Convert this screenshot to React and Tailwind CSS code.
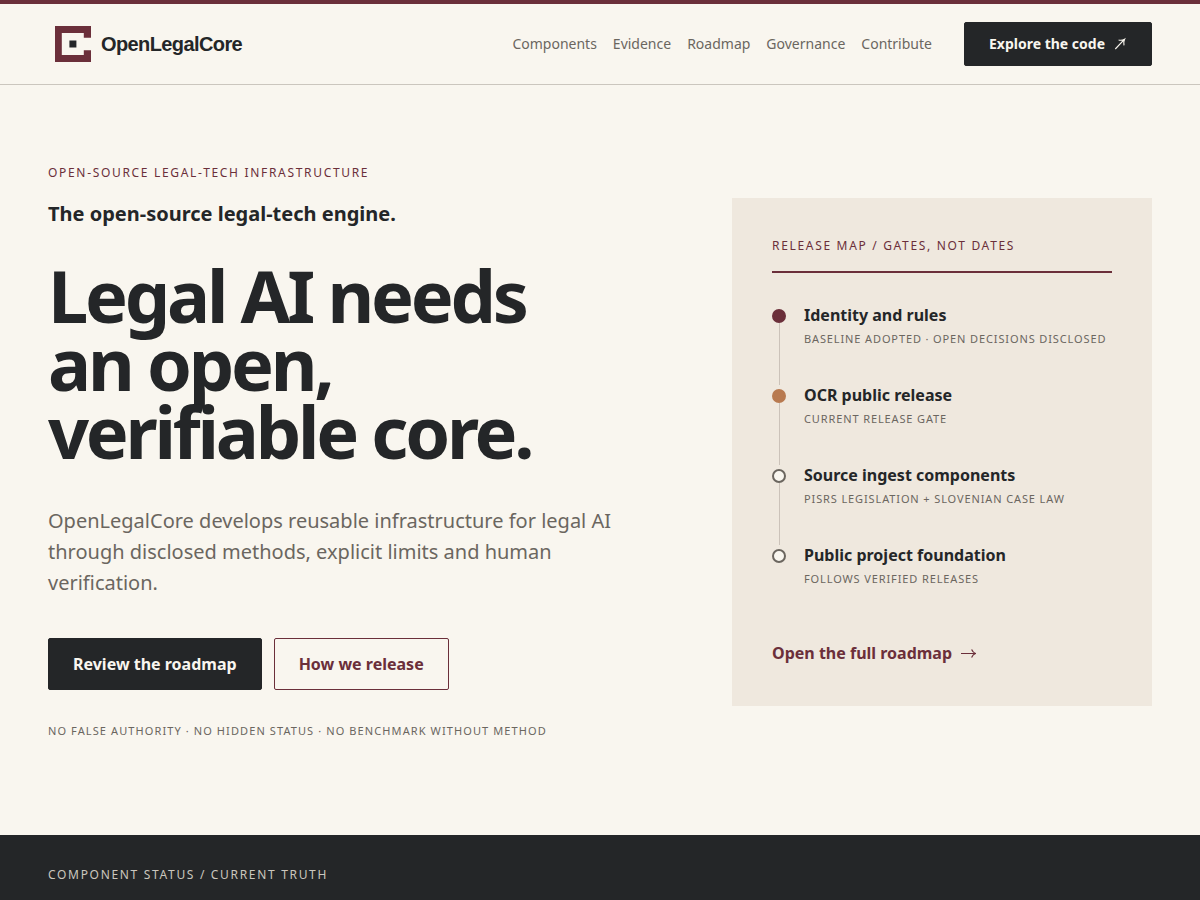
import { clsx } from 'clsx';

const NAV_LINKS = ['Components', 'Evidence', 'Roadmap', 'Governance', 'Contribute'];

const GATES = [
  { title: 'Identity and rules', note: 'Baseline adopted · open decisions disclosed', state: 'done' },
  { title: 'OCR public release', note: 'Current release gate', state: 'current' },
  { title: 'Source ingest components', note: 'PISRS legislation + Slovenian case law', state: 'next' },
  { title: 'Public project foundation', note: 'Follows verified releases', state: 'next' },
];

const Logo = () => (
  <a href="#top" className="flex items-center gap-[10px] pl-[7px]">
    <svg width="36" height="36" viewBox="0 0 36 36" aria-hidden="true">
      <path d="M0 0H36V11.8H28.8V7H6.8V29H28.8V24.2H36V36H0Z" fill="#6b2f3a" />
      <path d="M14.4 14.5H21.4V21.5H14.4Z" fill="#242628" />
    </svg>
    <span className="font-['Liberation_Sans',Arial,sans-serif] text-xl font-bold leading-6 tracking-[-0.03em]">
      OpenLegalCore
    </span>
  </a>
);

const ArrowRight = () => (
  <svg className="size-4" viewBox="0 0 16 16" fill="none" stroke="currentColor" strokeWidth="1.2" aria-hidden="true">
    <path d="M1 7.5H15.4M11.6 3.5C12.4 5.4 13.6 6.8 15.6 7.5C13.6 8.2 12.4 9.6 11.6 11.5" />
  </svg>
);

const ArrowUpRight = () => (
  <svg className="size-[14px]" viewBox="0 0 14 14" fill="none" stroke="currentColor" strokeWidth="1.1" aria-hidden="true">
    <path d="M2.3 12L11.4 2.4M5.6 3C7.6 3.5 9.6 3.3 11.6 2.2C10.6 4.2 10.5 6.2 11 8.3" />
  </svg>
);

const Eyebrow = ({ className, children }) => (
  <p className={clsx('text-xs leading-4 tracking-[0.14em] uppercase', className)}>{children}</p>
);

const Button = ({ variant = 'dark', className, children, ...props }) => (
  <a
    className={clsx(
      'inline-flex items-center justify-center gap-2 rounded-xs border px-6 font-bold',
      variant === 'dark' && 'border-[#242628] bg-[#242628] text-[#f9f6ef]',
      variant === 'outline' && 'border-[#6b2f3a] text-[#6b2f3a]',
      className
    )}
    {...props}
  >
    {children}
  </a>
);

const Header = () => (
  <header className="flex items-center justify-between border-b border-[#cbc6be] px-12 py-[18px]">
    <Logo />
    <div className="flex items-center gap-8">
      <nav className="flex items-center gap-4 text-sm text-[#6b665f]">
        {NAV_LINKS.map((link) => (
          <a key={link} href={`#${link.toLowerCase()}`}>
            {link}
          </a>
        ))}
      </nav>
      <Button href="#code" className="h-11 text-sm">
        Explore the code <ArrowUpRight />
      </Button>
    </div>
  </header>
);

const Gate = ({ title, note, state, isLast }) => (
  <li className="flex min-h-20 gap-[18px]">
    <div className="flex w-[14px] flex-col items-center pt-1">
      <span
        className={clsx(
          'size-[14px] shrink-0 rounded-full border-2',
          state === 'done' && 'border-[#6b2f3a] bg-[#6b2f3a]',
          state === 'current' && 'border-[#b87a50] bg-[#b87a50]',
          state === 'next' && 'border-[#6b665f] bg-[#f9f6ef]'
        )}
      />
      {!isLast && <span className="w-px flex-1 bg-[#cbc2b9]" />}
    </div>
    <div>
      <h3 className="font-bold leading-5">{title}</h3>
      <p className="mt-[6px] text-[11px] leading-4 tracking-[0.08em] text-[#6b665f] uppercase">{note}</p>
    </div>
  </li>
);

const ReleaseMap = () => (
  <aside className="bg-[#efe8de] p-10">
    <Eyebrow className="border-b-2 border-[#6b2f3a] pb-[17px] text-[#6b2f3a]">
      Release map / gates, not dates
    </Eyebrow>
    <ol className="mt-8">
      {GATES.map((gate, i) => (
        <Gate key={gate.title} {...gate} isLast={i === GATES.length - 1} />
      ))}
    </ol>
    <a href="#roadmap" className="mt-4 flex items-center gap-2 font-bold leading-[25px] text-[#6b2f3a]">
      Open the full roadmap <ArrowRight />
    </a>
  </aside>
);

const Hero = () => (
  <section className="grid grid-cols-[minmax(0,1fr)_420px] items-center gap-20 px-12 pt-20 pb-24">
    <div>
      <Eyebrow className="text-[#6b2f3a]">Open-source legal-tech infrastructure</Eyebrow>
      <p className="mt-[19px] text-xl font-bold leading-7">The open-source legal-tech engine.</p>
      <h1 className="mt-[33px] text-7xl font-bold leading-[68px] tracking-[-0.045em]">
        Legal AI needs
        <br />
        an open,
        <br />
        verifiable core.
      </h1>
      <p className="mt-10 max-w-[600px] text-xl leading-[31px] text-[#6b665f]">
        OpenLegalCore develops reusable infrastructure for legal AI through disclosed methods, explicit limits and
        human verification.
      </p>
      <div className="mt-10 flex flex-wrap gap-3">
        <Button href="#roadmap" className="h-[52px]">
          Review the roadmap
        </Button>
        <Button href="#governance" variant="outline" className="h-[52px]">
          How we release
        </Button>
      </div>
      <p className="mt-[33px] text-[11px] leading-4 tracking-[0.1em] text-[#6b665f] uppercase">
        No false authority · No hidden status · No benchmark without method
      </p>
    </div>
    <ReleaseMap />
  </section>
);

export default function App() {
  return (
    <div
      id="top"
      className="flex min-h-screen flex-col border-t-4 border-[#6b2f3a] bg-[#f9f6ef] font-['Noto_Sans',sans-serif] text-[#242628]"
    >
      <Header />
      <main className="flex flex-1 flex-col">
        <Hero />
        <section id="components" className="flex-1 bg-[#242628] px-12 pt-8 pb-4">
          <Eyebrow className="text-[#cbc6be]">Component status / current truth</Eyebrow>
        </section>
      </main>
    </div>
  );
}
